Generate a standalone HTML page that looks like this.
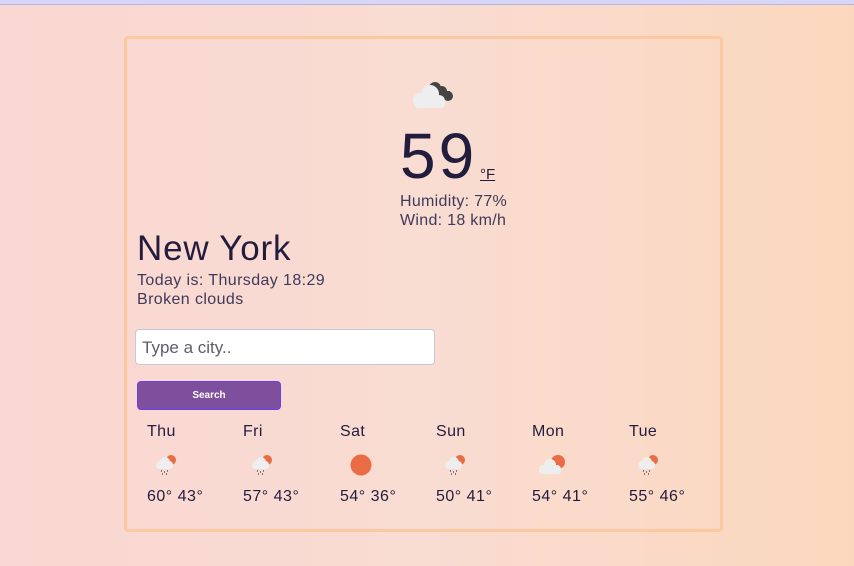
<!DOCTYPE html>
<html><head><style>
*{margin:0;padding:0;box-sizing:border-box}
body{width:854px;height:566px;overflow:hidden;font-family:"Liberation Sans",sans-serif;background:linear-gradient(90deg,#f9d7d2,#f9dcd2 50%,#fbd8bd);position:relative;color:#231d3d}
.top{position:absolute;left:0;top:0;width:854px;height:5px;background:#d8d6f8;border-bottom:1px solid #b9b5d8}
.box{position:absolute;left:124px;top:36px;width:599px;height:496px;border:3px solid #fdc89f;border-radius:4px}
.a{position:absolute;white-space:nowrap}
.day{font-size:16px;color:#231d3d;letter-spacing:0.4px}
.t{font-size:16px;color:#231d3d;letter-spacing:0.5px}
</style></head><body>
<div class="top"></div>
<div class="box"></div>
<svg class="a" style="left:408px;top:78px" width="50" height="34" viewBox="0 0 50 32">
<g fill="#444"><circle cx="27" cy="9" r="6"/><circle cx="34" cy="12" r="5"/><circle cx="40" cy="17" r="5"/><rect x="27" y="12" width="15" height="9"/></g>
<g fill="#eeeeee"><circle cx="22" cy="15" r="9"/><circle cx="12" cy="21" r="7"/><circle cx="31" cy="22" r="6"/><rect x="6" y="20" width="31" height="9" rx="4"/></g>
</svg>
<div class="a" style="left:400px;top:120px;font-size:64px;line-height:72px;letter-spacing:3px">59</div>
<div class="a" style="left:480px;top:166px;font-size:15px;text-decoration:underline">°F</div>
<div class="a" style="left:400px;top:192px;font-size:16px;color:#3f3a5a;line-height:19px;letter-spacing:0.3px">Humidity: 77%<br>Wind: 18 km/h</div>
<div class="a" style="left:137px;top:228px;font-size:35px;line-height:42px;letter-spacing:0.8px">New York</div>
<div class="a" style="left:137px;top:271px;font-size:16px;color:#3f3a5a;line-height:19px;letter-spacing:0.4px">Today is: Thursday 18:29<br>Broken clouds</div>
<div class="a" style="left:135px;top:329px;width:300px;height:36px;background:#fff;border:1px solid #c8c8d4;border-radius:4px;font-size:17px;color:#5d5d6a;padding:8px 6px">Type a city..</div>
<div class="a" style="left:137px;top:381px;width:144px;height:29px;background:#7e4f9c;border:1px solid #6b3ff0;border-radius:4px;color:#fff;font-size:10px;font-weight:bold;text-align:center;line-height:27px">Search</div>

<div class="a day" style="left:147px;top:423px">Thu</div>
<div class="a day" style="left:243px;top:423px">Fri</div>
<div class="a day" style="left:340px;top:423px">Sat</div>
<div class="a day" style="left:436px;top:423px">Sun</div>
<div class="a day" style="left:532px;top:423px">Mon</div>
<div class="a day" style="left:629px;top:423px">Tue</div>

<svg width="0" height="0" style="position:absolute"><defs>
<g id="r"><circle cx="16" cy="8" r="5" fill="#ea6c44"/><g fill="#eeeeee"><circle cx="10" cy="10" r="5"/><circle cx="5" cy="13" r="4"/><circle cx="14" cy="13" r="4"/><rect x="2" y="12" width="15" height="5" rx="2"/></g><g fill="#777"><rect x="6" y="18" width="1" height="2"/><rect x="9" y="19" width="1" height="2"/><rect x="12" y="18" width="1" height="2"/><rect x="7" y="21" width="1" height="2"/><rect x="11" y="21" width="1" height="2"/></g></g>
</defs></svg>
<svg class="a" style="left:155px;top:452px" width="24" height="26"><use href="#r"/></svg>
<svg class="a" style="left:251px;top:452px" width="24" height="26"><use href="#r"/></svg>
<svg class="a" style="left:349px;top:454px" width="24" height="24"><circle cx="12" cy="11" r="10.5" fill="#ea6c44"/></svg>
<svg class="a" style="left:444px;top:452px" width="24" height="26"><use href="#r"/></svg>
<svg class="a" style="left:538px;top:452px" width="30" height="26"><circle cx="20" cy="10" r="7" fill="#ea6c44"/><g fill="#eeeeee"><circle cx="12" cy="13" r="6"/><circle cx="5" cy="17" r="4"/><circle cx="19" cy="17" r="4"/><rect x="1" y="16" width="22" height="6" rx="3"/></g></svg>
<svg class="a" style="left:637px;top:452px" width="24" height="26"><use href="#r"/></svg>

<div class="a t" style="left:147px;top:488px">60° 43°</div>
<div class="a t" style="left:243px;top:488px">57° 43°</div>
<div class="a t" style="left:340px;top:488px">54° 36°</div>
<div class="a t" style="left:436px;top:488px">50° 41°</div>
<div class="a t" style="left:532px;top:488px">54° 41°</div>
<div class="a t" style="left:629px;top:488px">55° 46°</div>
</body></html>
